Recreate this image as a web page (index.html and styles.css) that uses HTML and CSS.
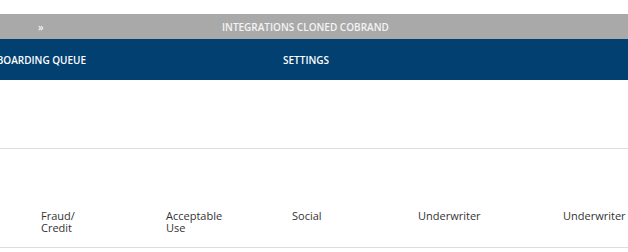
FILE: index.html
```html
<!DOCTYPE html>
<html>
<head>
<meta charset="utf-8">
<link rel="stylesheet" href="styles.css">
</head>
<body>
<div class="page">
  <div class="topbar">
    <span class="toggle">»</span>
    <span class="title">INTEGRATIONS CLONED COBRAND</span>
  </div>
  <nav class="mainnav">
    <div class="navtrack">
      <a class="navitem first">ONBOARDING QUEUE</a>
      <a class="navitem">SETTINGS</a>
    </div>
  </nav>
  <div class="spacer"></div>
  <div class="table">
    <div class="thead">
      <div class="th c1">Fraud/<br>Credit</div>
      <div class="th c2">Acceptable<br>Use</div>
      <div class="th c3">Social</div>
      <div class="th c4">Underwriter</div>
      <div class="th c5">Underwriter</div>
    </div>
  </div>
</div>
</body>
</html>
```

FILE: styles.css
```css
html, body {
  margin: 0;
  padding: 0;
  background: #ffffff;
  overflow: hidden;
}
.page {
  width: 628px;
  padding-top: 14px;
  font-family: "Open Sans", "Liberation Sans", sans-serif;
}
.topbar {
  height: 25px;
  background: #a9a9a9;
  color: #f4f4f4;
  display: flex;
  align-items: center;
  font-size: 10px;
  font-weight: 600;
}
.toggle {
  width: 222px;
  flex: none;
  padding-left: 38px;
  box-sizing: border-box;
}
.title {
  white-space: nowrap;
}
.mainnav {
  height: 41px;
  background: #034072;
  overflow: hidden;
}
.navtrack {
  display: flex;
  align-items: center;
  height: 100%;
  margin-left: -19px;
  font-size: 10px;
  font-weight: 600;
  color: #ffffff;
}
.navitem {
  white-space: nowrap;
  flex: none;
}
.navitem.first {
  width: 302px;
}
.spacer {
  height: 68px;
  border-bottom: 1px solid #dddddd;
}
.thead {
  display: flex;
  align-items: flex-start;
  height: 99px;
  box-sizing: border-box;
  padding-top: 61px;
  border-bottom: 1px solid #dddddd;
  font-size: 11px;
  line-height: 12px;
  color: #333333;
}
.th {
  flex: none;
}
.c1 { width: 125px; padding-left: 41px; }
.c2 { width: 126px; }
.c3 { width: 126px; }
.c4 { width: 145px; }
.c5 { width: 65px; }
```
